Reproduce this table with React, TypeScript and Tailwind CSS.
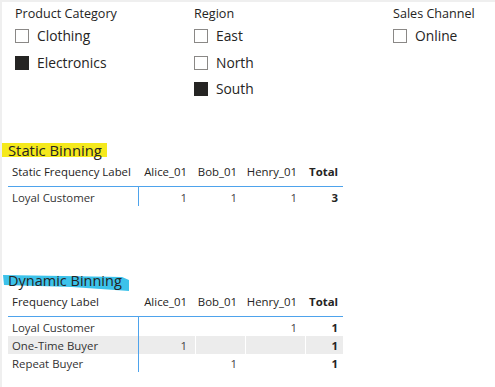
import React from "react";

const font = { fontFamily: '"Open Sans", "Noto Sans", sans-serif' };

function Box({ checked }: { checked?: boolean }) {
  return checked ? (
    <span className="inline-block w-[14px] h-[14px] bg-[#252423] shrink-0" />
  ) : (
    <span className="inline-block w-[14px] h-[14px] border border-[#8a8886] bg-white shrink-0" />
  );
}

function Slicer({ title, items, width }: { title: string; items: { label: string; checked?: boolean }[]; width: string }) {
  return (
    <div className={width}>
      <div className="text-[12.6px] leading-[16px] text-[#252423]">{title}</div>
      <div className="mt-[1px] flex flex-col">
        {items.map((it) => (
          <div key={it.label} className="h-[26.5px] flex items-center gap-[8px]">
            <Box checked={it.checked} />
            <span className="text-[13.8px] leading-[18px] text-[#252423]">{it.label}</span>
          </div>
        ))}
      </div>
    </div>
  );
}

const cols = "grid grid-cols-[131px_56px_50px_60px_38px]";

function Table({
  labelHeader,
  rows,
}: {
  labelHeader: string;
  rows: { label: string; vals: (string | null)[]; total: string; shade?: boolean }[];
}) {
  return (
    <div className="ml-[6px] w-[335px] text-[11.4px] text-[#252423]">
      <div className={`${cols} h-[28px] items-center border-b border-[#4ea3ec]`}>
        <div className="pl-[4px]">{labelHeader}</div>
        <div className="text-right pr-[8px]">Alice_01</div>
        <div className="text-right pr-[8px]">Bob_01</div>
        <div className="text-right pr-[8px]">Henry_01</div>
        <div className="text-right pr-[5px] font-bold">Total</div>
      </div>
      <div className="h-[1px] w-[131px] border-r border-[#4ea3ec]" />
      {rows.map((r) => (
        <div key={r.label} className={`${cols} h-[18px] ${r.shade ? "bg-[#ececec]" : ""}`}>
          <div className="pl-[4px] pt-[1px] flex items-center border-r border-[#4ea3ec] text-[#333333]">{r.label}</div>
          {r.vals.map((v, i) => (
            <div key={i} className={`flex items-center justify-end pt-[1px] pr-[8px] text-[#444444] ${i > 0 ? "border-l border-white" : ""}`}>
              {v}
            </div>
          ))}
          <div className="flex items-center justify-end pt-[1px] pr-[5px] font-bold border-l border-white">{r.total}</div>
        </div>
      ))}
    </div>
  );
}

export default function App() {
  return (
    <div style={font} className="w-[495px] h-[387px] bg-white border-t-2 border-l-2 border-[#efefef] overflow-hidden">
      <div className="pt-[4px] pl-[13px] flex">
        <Slicer
          width="w-[179px]"
          title="Product Category"
          items={[{ label: "Clothing" }, { label: "Electronics", checked: true }]}
        />
        <Slicer
          width="w-[199px]"
          title="Region"
          items={[{ label: "East" }, { label: "North" }, { label: "South", checked: true }]}
        />
        <Slicer width="w-[100px]" title="Sales Channel" items={[{ label: "Online" }]} />
      </div>

      <div className="mt-[40px] h-[14px] relative">
        <div className="w-[105px] h-[14px] bg-[#f5e91c]" />
        <div className="absolute left-[6px] top-[-2px] text-[14.8px] leading-[18px] text-[#252423]">Static Binning</div>
      </div>
      <div className="h-[2px]" />
      <Table
        labelHeader="Static Frequency Label"
        rows={[{ label: "Loyal Customer", vals: ["1", "1", "1"], total: "3" }]}
      />

      <div className="mt-[67px] h-[16px] relative">
        <svg width="130" height="20" className="absolute left-0 top-0" viewBox="0 0 130 20">
          <path d="M1 2 L120 4 L127 7 L127 18 L70 14 L2 12 Z" fill="#3cc2ea" />
        </svg>
        <div className="absolute left-[6px] top-[-1px] text-[14.5px] leading-[18px] text-[#252423]">Dynamic Binning</div>
      </div>
      <Table
        labelHeader="Frequency Label"
        rows={[
          { label: "Loyal Customer", vals: [null, null, "1"], total: "1" },
          { label: "One-Time Buyer", vals: ["1", null, null], total: "1", shade: true },
          { label: "Repeat Buyer", vals: [null, "1", null], total: "1" },
        ]}
      />
    </div>
  );
}
